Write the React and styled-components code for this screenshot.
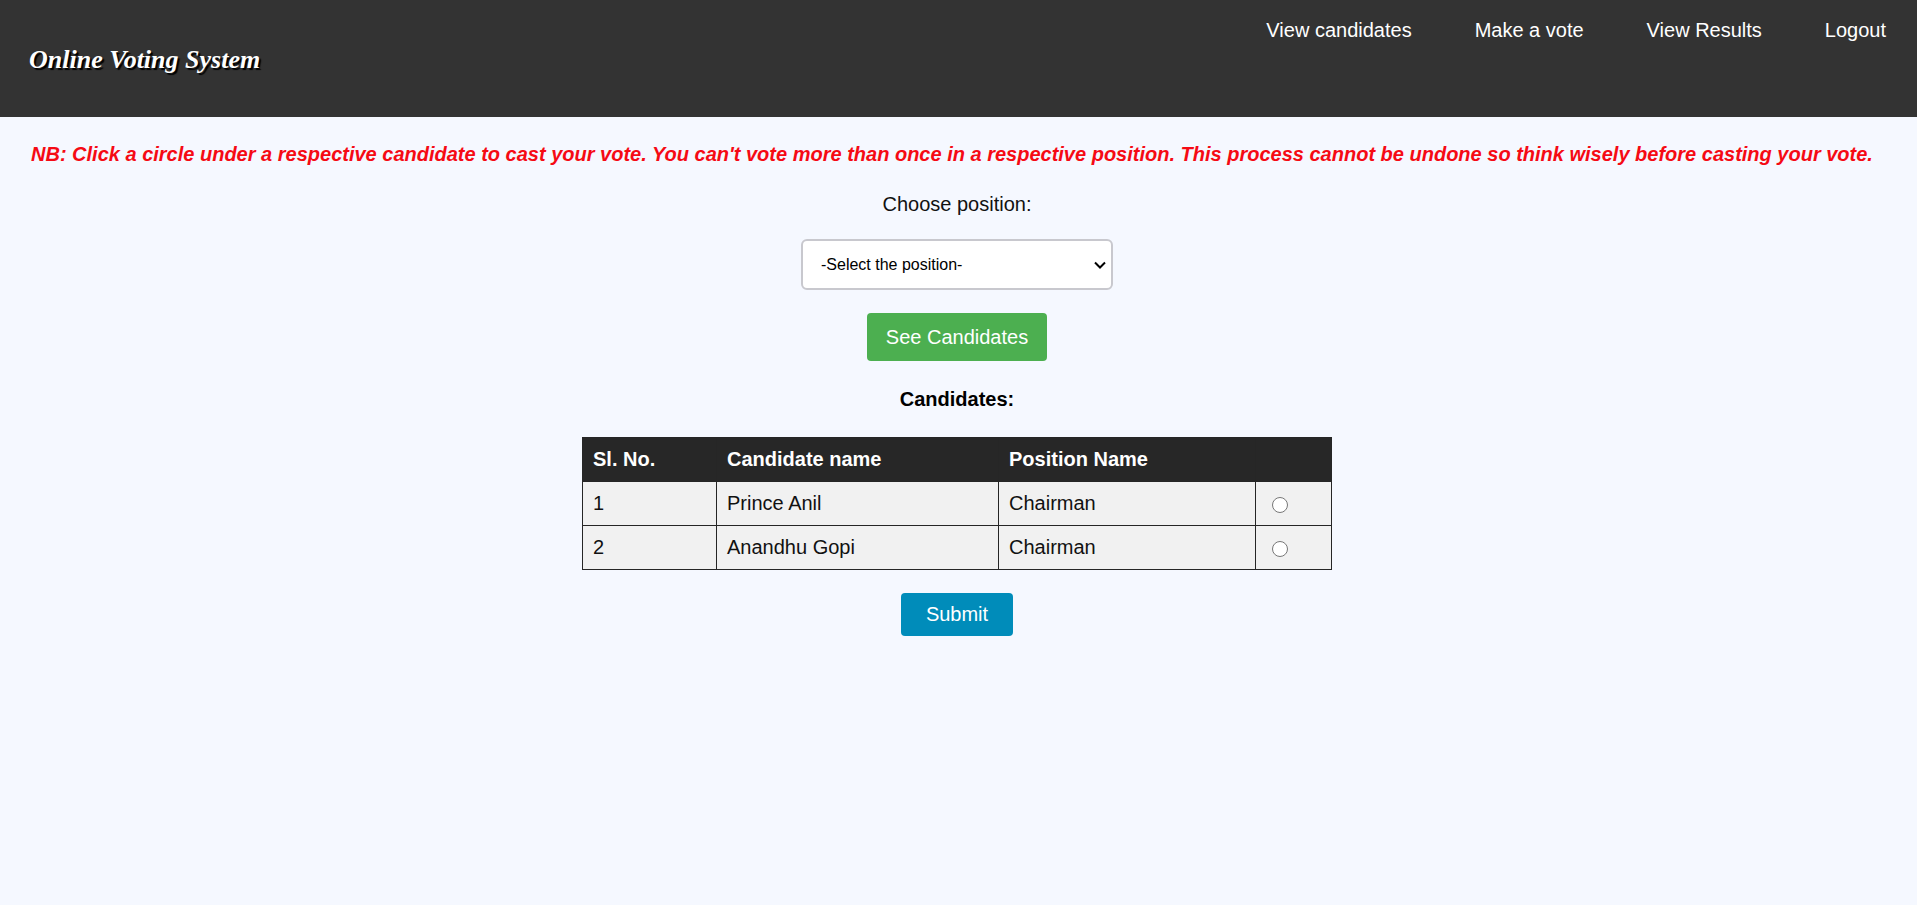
import React from "react";
import styled, { createGlobalStyle } from "styled-components";

const GlobalStyle = createGlobalStyle`
  * { box-sizing: border-box; }
  body {
    margin: 0;
    background: #f5f8ff;
    color: #111;
    font-family: Arial, "Liberation Sans", sans-serif;
    font-size: 20px;
    line-height: 24px;
  }
`;

const Header = styled.header`
  display: flex;
  justify-content: space-between;
  align-items: flex-start;
  min-height: 117px;
  padding: 18px 31px 18px 29px;
  background: #333;
`;

const Logo = styled.div`
  padding-top: 26px;
  color: #fff;
  font: italic bold 26px/32px "Brush Script MT", "Liberation Serif", serif;
  text-shadow: 2px 2px 1px #000;
`;

const Nav = styled.nav`
  display: flex;
  flex-wrap: wrap;
  gap: 12px 63px;
`;

const NavLink = styled.a`
  color: #fff;
  text-decoration: none;
`;

const Main = styled.main`
  padding: 25px 34px 24px 31px;
`;

const Notice = styled.p`
  margin: 0 0 26px;
  color: #f50a14;
  font-weight: bold;
  font-style: italic;
`;

const Form = styled.form`
  display: flex;
  flex-direction: column;
  align-items: center;
`;

const SelectBox = styled.div`
  position: relative;
  width: 312px;
  max-width: 100%;
  margin: 23px 0;
`;

const Select = styled.select`
  display: block;
  appearance: none;
  width: 100%;
  height: 51px;
  padding: 0 24px 0 18px;
  border: 2px solid #c8c8ce;
  border-radius: 6px;
  background: #fff;
  color: #000;
  font: 16px Arial, "Liberation Sans", sans-serif;
`;

const Chevron = styled.svg`
  position: absolute;
  top: 0;
  bottom: 0;
  right: 6px;
  width: 14px;
  height: 10px;
  margin: auto 0;
  pointer-events: none;
`;

const Button = styled.button`
  width: ${(p) => (p.$primary ? 112 : 180)}px;
  height: ${(p) => (p.$primary ? 43 : 48)}px;
  padding: 0;
  border: 0;
  border-radius: 4px;
  background: ${(p) => (p.$primary ? "#008cba" : "#4caf50")};
  color: #fff;
  font: 20px Arial, "Liberation Sans", sans-serif;
  cursor: pointer;
`;

const Heading = styled.h2`
  margin: 26px 0;
  color: #000;
  font-size: 20px;
  line-height: 24px;
`;

const Table = styled.table`
  width: 750px;
  max-width: 100%;
  margin-bottom: 23px;
  border-collapse: collapse;
  table-layout: fixed;
`;

const Column = styled.col`
  width: ${(p) => p.$width}px;
`;

const HeadCell = styled.th`
  height: 44px;
  padding: 0 10px 2px;
  border: 1px solid #262626;
  background: #272727;
  color: #fff;
  text-align: left;
`;

const Cell = styled.td`
  height: 44px;
  padding: 0 10px 2px;
  border: 1px solid #262626;
  background: #f1f1f1;
`;

const Radio = styled.input`
  display: block;
  width: 16px;
  height: 16px;
  margin: 5px 0 0 6px;
`;

const links = ["View candidates", "Make a vote", "View Results", "Logout"];
const candidates = ["Prince Anil", "Anandhu Gopi"];

export default function App() {
  return (
    <>
      <GlobalStyle />
      <Header>
        <Logo>Online Voting System</Logo>
        <Nav>
          {links.map((label) => (
            <NavLink key={label} href="#">{label}</NavLink>
          ))}
        </Nav>
      </Header>
      <Main>
        <Notice>
          NB: Click a circle under a respective candidate to cast your vote. You can't vote more than once in a
          respective position. This process cannot be undone so think wisely before casting your vote.
        </Notice>
        <Form onSubmit={(e) => e.preventDefault()}>
          <label htmlFor="position">Choose position:</label>
          <SelectBox>
            <Select id="position" defaultValue="">
              <option value="">-Select the position-</option>
              <option value="chairman">Chairman</option>
            </Select>
            <Chevron viewBox="0 0 14 10" aria-hidden="true">
              <path d="M2 2.5 L7 7.5 L12 2.5" fill="none" stroke="#000" strokeWidth="2" />
            </Chevron>
          </SelectBox>
          <Button type="button">See Candidates</Button>
          <Heading>Candidates:</Heading>
          <Table>
            <colgroup>
              <Column $width={134} />
              <Column $width={282} />
              <Column $width={257} />
              <Column $width={76} />
            </colgroup>
            <thead>
              <tr>
                <HeadCell>Sl. No.</HeadCell>
                <HeadCell>Candidate name</HeadCell>
                <HeadCell>Position Name</HeadCell>
                <HeadCell />
              </tr>
            </thead>
            <tbody>
              {candidates.map((name, i) => (
                <tr key={name}>
                  <Cell>{i + 1}</Cell>
                  <Cell>{name}</Cell>
                  <Cell>Chairman</Cell>
                  <Cell>
                    <Radio type="radio" name="candidate" value={name} aria-label={name} />
                  </Cell>
                </tr>
              ))}
            </tbody>
          </Table>
          <Button type="submit" $primary>Submit</Button>
        </Form>
      </Main>
    </>
  );
}
